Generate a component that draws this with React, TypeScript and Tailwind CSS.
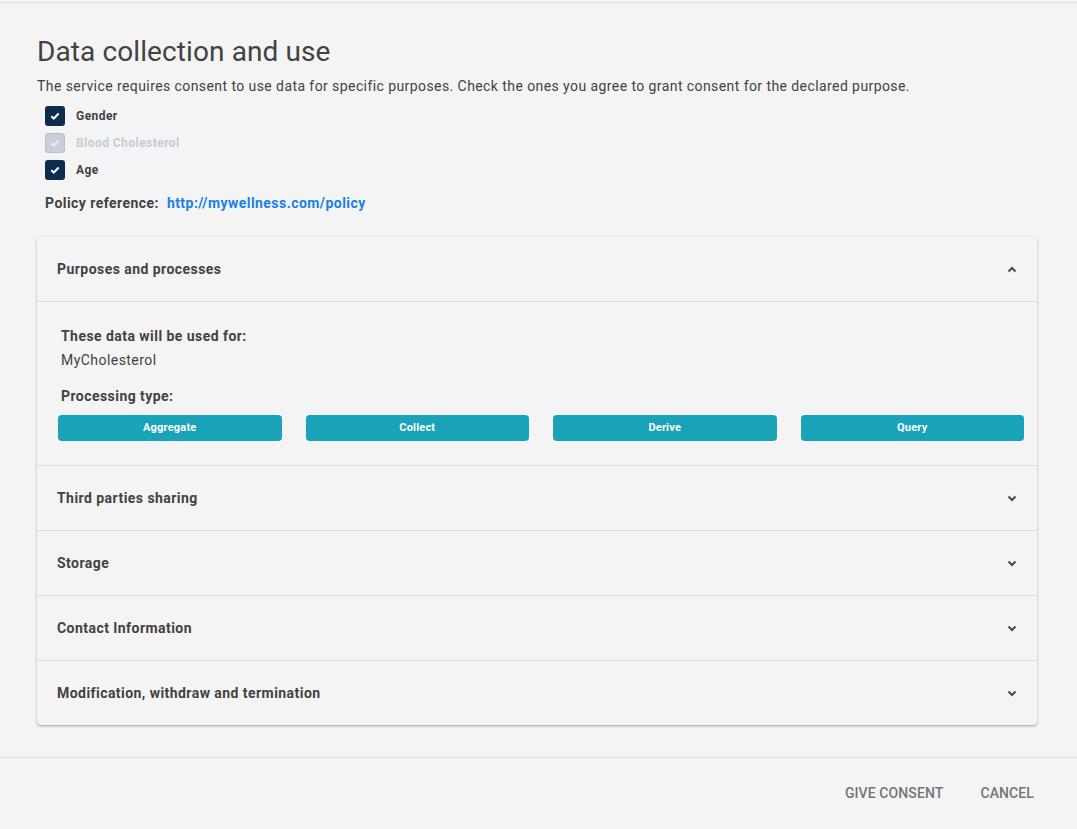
import React, { useState } from "react";

const dataItems = [
  { id: "gender", label: "Gender", checked: true, disabled: false },
  { id: "chol", label: "Blood Cholesterol", checked: true, disabled: true },
  { id: "age", label: "Age", checked: true, disabled: false },
];

const processing = ["Aggregate", "Collect", "Derive", "Query"];

const sections = [
  "Third parties sharing",
  "Storage",
  "Contact Information",
  "Modification, withdraw and termination",
];

function Chevron({ up }: { up?: boolean }) {
  return (
    <svg width="10" height="7" viewBox="0 0 10 7" className={up ? "" : "rotate-180"}>
      <polyline
        points="1.5,5.5 5,2 8.5,5.5"
        fill="none"
        stroke="#4a4a4a"
        strokeWidth="2"
      />
    </svg>
  );
}

function CheckBox({ checked, disabled }: { checked: boolean; disabled: boolean }) {
  return (
    <span
      className={`w-5 h-5 rounded-[3px] flex items-center justify-center shrink-0 ${disabled ? "bg-[#c9cfd9] border border-[#b9c0cc]" : "bg-[#0c2d4e]"}`}
    >
      {checked && (
        <svg width="10" height="8" viewBox="0 0 10 8">
          <polyline
            points="1.3,4.2 3.8,6.5 8.7,1.5"
            fill="none"
            stroke={disabled ? "#e6e9ef" : "#ffffff"}
            strokeWidth="2"
          />
        </svg>
      )}
    </span>
  );
}

export default function App() {
  const [items, setItems] = useState(dataItems);
  const [open, setOpen] = useState<string | null>("purposes");

  return (
    <div className="min-h-screen bg-[#f4f4f4] text-[#424242] font-['Roboto',sans-serif] pt-[2px]">
      <div className="border-t border-[#dcdcdc]" />

      <div className="pl-[37px] pr-[40px]">
        <h1 className="mt-[33px] text-[28px] leading-[32px] font-normal tracking-[0.1px]">
          Data collection and use
        </h1>
        <p className="mt-2 text-[14px] leading-5 tracking-[0.42px]">
          The service requires consent to use data for specific purposes. Check the ones you agree to grant consent for the declared purpose.
        </p>

        {/* Data checkboxes */}
        <div className="mt-[6px] pl-2">
          {items.map((it) => (
            <label
              key={it.id}
              className="h-[27px] flex items-center gap-[11px] cursor-pointer"
              onClick={() =>
                !it.disabled &&
                setItems(items.map((x) => (x.id === it.id ? { ...x, checked: !x.checked } : x)))
              }
            >
              <CheckBox checked={it.checked} disabled={it.disabled} />
              <span
                className={`text-[12px] font-bold tracking-[0.45px] ${it.disabled ? "text-[#c5cbd6]" : "text-[#424242]"}`}
              >
                {it.label}
              </span>
            </label>
          ))}
        </div>

        <div className="mt-[10px] pl-2 text-[14px] leading-5 font-bold tracking-[0.45px]">
          Policy reference:
          <a href="#" className="ml-2 text-[#1a80e6]">
            http://mywellness.com/policy
          </a>
        </div>

        {/* Accordion card */}
        <div className="mt-[24px] w-[1000px] rounded-[4px] bg-[#f4f4f4] shadow-[0_1px_3px_rgba(0,0,0,0.25),0_1px_1px_rgba(0,0,0,0.1)]">
          <div className="border-b border-[#dedede]">
            <button
              onClick={() => setOpen(open === "purposes" ? null : "purposes")}
              className="w-full h-16 px-5 flex items-center justify-between text-left"
            >
              <span className="text-[14px] font-bold tracking-[0.45px]">Purposes and processes</span>
              <Chevron up={open === "purposes"} />
            </button>
          </div>
          {open === "purposes" && (
            <div className="border-b border-[#dedede] pt-[24px] pb-[24px] pl-[21px] pr-[13px]">
              <div className="pl-[3px] tracking-[0.45px]">
                <p className="text-[14px] leading-5 font-bold">These data will be used for:</p>
                <p className="mt-1 text-[14px] leading-5">MyCholesterol</p>
                <p className="mt-4 text-[14px] leading-5 font-bold">Processing type:</p>
              </div>
              <div className="mt-[9px] grid grid-cols-4 gap-6">
                {processing.map((p) => (
                  <button
                    key={p}
                    className="h-[26px] rounded-[4px] bg-[#18a3b8] text-white text-[11px] font-bold tracking-[0.2px]"
                  >
                    {p}
                  </button>
                ))}
              </div>
            </div>
          )}
          {sections.map((s, i) => (
            <div
              key={s}
              className={i < sections.length - 1 ? "border-b border-[#dedede]" : ""}
            >
              <button
                onClick={() => setOpen(open === s ? null : s)}
                className="w-full h-16 px-5 flex items-center justify-between text-left"
              >
                <span className="text-[14px] font-bold tracking-[0.45px]">{s}</span>
                <Chevron up={open === s} />
              </button>
            </div>
          ))}
        </div>
      </div>

      {/* Footer */}
      <div className="mt-8 border-t border-[#dcdcdc] h-[71px] flex items-center justify-end pr-[43px] gap-[37px]">
        <button className="text-[14px] font-medium uppercase text-[#757575] tracking-[0.1px]">
          Give consent
        </button>
        <button className="text-[14px] font-medium uppercase text-[#757575] tracking-[0.1px]">
          Cancel
        </button>
      </div>
    </div>
  );
}
